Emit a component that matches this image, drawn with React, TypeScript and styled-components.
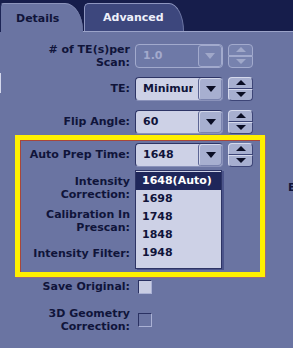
import React from "react";
import styled, { createGlobalStyle, css } from "styled-components";

const Global = createGlobalStyle`
  html, body { margin: 0; padding: 0; background: #161d4b; overflow: hidden; }
  body { font-family: "DejaVu Sans", "Liberation Sans", sans-serif; }
`;

const Screen = styled.div`
  width: 293px;
  height: 348px;
  display: flex;
  flex-direction: column;
  overflow: hidden;
  background: #161d4b;
`;

const TabBar = styled.div`
  display: flex;
  align-items: flex-end;
  height: 32px;
  box-sizing: border-box;
  padding-top: 3px;
  border-bottom: 1px solid #9ba3c9;
`;

const Tab = styled.div<{ $active?: boolean; $width: number }>`
  width: ${(p) => p.$width}px;
  height: 28px;
  box-sizing: border-box;
  display: flex;
  align-items: center;
  font-size: 11px;
  font-weight: bold;
  ${(p) =>
    p.$active
      ? css`
          background: #6a74a2;
          color: #10143a;
          padding-left: 15px;
          height: 29px;
          margin-bottom: -1px;
          position: relative;
          z-index: 1;
          border-top: 1px solid #8c94bc;
          border-left: 1px solid #1c2455;
          border-radius: 4px 18px 0 0 / 4px 28px 0 0;
        `
      : css`
          background: #3d477d;
          color: #eef0fa;
          padding-left: 18px;
          margin-left: 1px;
          border-top: 1px solid #8e96c0;
          border-left: 1px solid #8e96c0;
          border-right: 1px solid #6b74a2;
          border-radius: 5px 15px 0 0 / 5px 28px 0 0;
        `}
`;

const Panel = styled.div`
  flex: 1;
  position: relative;
  background: #6a74a2;
  padding-top: 7px;
  overflow: hidden;
  &::before {
    content: "";
    position: absolute;
    left: 0;
    top: 41px;
    width: 1px;
    height: 20px;
    background: #d3d7ec;
  }
`;

const Form = styled.div`
  display: grid;
  grid-template-columns: 130px 88px 25px 1fr;
  column-gap: 5px;
  grid-auto-rows: 33px;
  align-items: center;
`;

const Label = styled.div`
  grid-column: 1;
  text-align: right;
  font-size: 11px;
  font-weight: bold;
  line-height: 13px;
  color: #10143a;
  white-space: nowrap;
`;

const SideLabel = styled.div`
  grid-column: 4;
  margin-left: 30px;
  font-size: 11px;
  font-weight: bold;
  color: #10143a;
  white-space: nowrap;
`;

const ComboCell = styled.div`
  grid-column: 2;
  position: relative;
`;

const Combo = styled.div<{ $disabled?: boolean }>`
  display: flex;
  width: 88px;
  height: 24px;
  box-sizing: border-box;
  border-radius: 4px;
  overflow: hidden;
  border: 1px solid;
  ${(p) =>
    p.$disabled
      ? css`
          border-color: #a2aacd;
          background: #6e79a7;
        `
      : css`
          border-color: #2d3465 #8a92ba #8a92ba #2d3465;
          background: #cdd1e6;
        `}
`;

const ComboText = styled.div<{ $disabled?: boolean }>`
  flex: 1;
  min-width: 0;
  padding: 0 5px 0 7px;
  font-size: 11px;
  font-weight: bold;
  line-height: 22px;
  color: ${(p) => (p.$disabled ? "#a3aacd" : "#10143a")};
`;

const ComboValue = styled.span`
  display: block;
  overflow: hidden;
  white-space: nowrap;
`;

const ComboButton = styled.div<{ $disabled?: boolean }>`
  width: 24px;
  flex: none;
  display: flex;
  align-items: center;
  justify-content: center;
  box-sizing: border-box;
  border-radius: 3px;
  ${(p) =>
    p.$disabled
      ? css`
          background: #7782ae;
          border: 1px solid #a2aacd;
        `
      : css`
          background: #a7afd0;
          border-left: 1px solid #5c6594;
          box-shadow: inset 1px 1px 0 #d3d7ea, inset -1px -1px 0 #7a83ae;
        `}
`;

const Arrow = styled.span<{ $dir: "up" | "down"; $color: string; $w?: number; $h?: number }>`
  width: 0;
  height: 0;
  border-left: ${(p) => (p.$w ?? 11) / 2}px solid transparent;
  border-right: ${(p) => (p.$w ?? 11) / 2}px solid transparent;
  ${(p) =>
    p.$dir === "down"
      ? `border-top: ${p.$h ?? 6}px solid ${p.$color};`
      : `border-bottom: ${p.$h ?? 6}px solid ${p.$color};`}
`;

const Stepper = styled.div`
  grid-column: 3;
  width: 25px;
  height: 24px;
  display: flex;
  flex-direction: column;
`;

const StepHalf = styled.div<{ $top?: boolean; $disabled?: boolean }>`
  flex: 1;
  display: flex;
  align-items: center;
  justify-content: center;
  box-sizing: border-box;
  border: 1px solid;
  border-radius: ${(p) => (p.$top ? "4px 4px 0 0" : "0 0 4px 4px")};
  ${(p) =>
    p.$disabled
      ? css`
          background: #7782ae;
          border-color: #a2aacd;
        `
      : css`
          background: #a7afd0;
          border-color: #d5d9ec #3d4577 #3d4577 #d5d9ec;
        `}
`;

const Check = styled.div<{ $filled?: boolean }>`
  grid-column: 2;
  margin-left: 3px;
  width: 14px;
  height: 14px;
  box-sizing: border-box;
  border: 1px solid;
  border-color: #2a3162 #aab1d4 #aab1d4 #2a3162;
  background: ${(p) => (p.$filled ? "#c9cde3" : "transparent")};
`;

const Menu = styled.div`
  position: absolute;
  top: 27px;
  left: 0;
  width: 87px;
  height: 99px;
  box-sizing: border-box;
  padding-top: 1px;
  background: #cdd1e6;
  border: 1px solid #2d3465;
  box-shadow: 2px 1px 0 #4b548a;
  z-index: 2;
`;

const MenuItem = styled.div<{ $selected?: boolean }>`
  height: 18px;
  line-height: 18px;
  padding-left: 6px;
  font-size: 11px;
  font-weight: bold;
  color: ${(p) => (p.$selected ? "#ffffff" : "#10143a")};
  background: ${(p) => (p.$selected ? "#1e265a" : "transparent")};
`;

const Highlight = styled.div`
  position: absolute;
  left: 15px;
  top: 103px;
  width: 250px;
  height: 142px;
  box-sizing: border-box;
  border: 5px solid #fff000;
  box-shadow: inset 1px 1px 0 #a8463a, 1px 1px 0 #9a6a80;
  pointer-events: none;
  z-index: 3;
`;

type ComboProps = { value: string; disabled?: boolean; children?: React.ReactNode };

function ComboBox({ value, disabled, children }: ComboProps) {
  return (
    <ComboCell>
      <Combo $disabled={disabled}>
        <ComboText $disabled={disabled}>
          <ComboValue>{value}</ComboValue>
        </ComboText>
        <ComboButton $disabled={disabled}>
          <Arrow $dir="down" $color={disabled ? "#a0a8c9" : "#0a0d24"} />
        </ComboButton>
      </Combo>
      {children}
    </ComboCell>
  );
}

function Spin({ disabled }: { disabled?: boolean }) {
  const c = disabled ? "#a0a8c9" : "#0a0d24";
  return (
    <Stepper>
      <StepHalf $top $disabled={disabled}>
        <Arrow $dir="up" $color={c} $w={11} $h={5} />
      </StepHalf>
      <StepHalf $disabled={disabled}>
        <Arrow $dir="down" $color={c} $w={11} $h={5} />
      </StepHalf>
    </Stepper>
  );
}

const prepOptions = ["1648(Auto)", "1698", "1748", "1848", "1948"];

export default function App() {
  return (
    <>
      <Global />
      <Screen>
        <TabBar>
          <Tab $active $width={83}>Details</Tab>
          <Tab $width={100}>Advanced</Tab>
        </TabBar>
        <Panel>
          <Form>
            <Label>
              # of TE(s)per
              <br />
              Scan:
            </Label>
            <ComboBox value="1.0" disabled />
            <Spin disabled />

            <Label>TE:</Label>
            <ComboBox value="Minimum" />
            <Spin />

            <Label>Flip Angle:</Label>
            <ComboBox value="60" />
            <Spin />

            <Label>Auto Prep Time:</Label>
            <ComboBox value="1648">
              <Menu>
                {prepOptions.map((o, i) => (
                  <MenuItem key={o} $selected={i === 0}>
                    {o}
                  </MenuItem>
                ))}
              </Menu>
            </ComboBox>
            <Spin />

            <Label>
              Intensity
              <br />
              Correction:
            </Label>
            <SideLabel>E</SideLabel>

            <Label>
              Calibration In
              <br />
              Prescan:
            </Label>

            <Label>Intensity Filter:</Label>

            <Label>Save Original:</Label>
            <Check $filled />

            <Label>
              3D Geometry
              <br />
              Correction:
            </Label>
            <Check />
          </Form>
          <Highlight />
        </Panel>
      </Screen>
    </>
  );
}
